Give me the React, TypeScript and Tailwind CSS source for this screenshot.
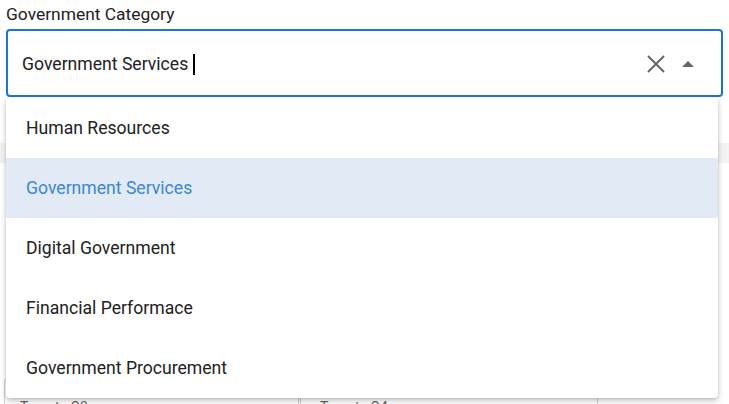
import React from 'react'

const options = [
  'Human Resources',
  'Government Services',
  'Digital Government',
  'Financial Performace',
  'Government Procurement',
]

const selected = 'Government Services'

const App = () => {
  return (
    <div className="relative w-[729px] h-[404px] overflow-hidden bg-white font-['Roboto',sans-serif] text-[#212121]">
      <div className="px-[6px]">
        <label className="block text-[17.4px] leading-[20px] pt-[4px] text-[#212121]">Government Category</label>
        <div className="mt-[5px] h-[68px] border-2 border-[#1976d2] rounded-[4px] flex items-center pl-[14px] pr-[27px] pt-[2px]">
          <span className="text-[17.6px] text-[#212121]">{selected}</span>
          <span className="ml-[5px] w-[2px] h-[21px] bg-black" />
          <div className="flex-1" />
          <svg width="20" height="20" viewBox="0 0 20 20" className="mr-[16px]">
            <path d="M2 2 L18 18 M18 2 L2 18" stroke="#666" strokeWidth="2" fill="none" />
          </svg>
          <svg width="12" height="6" viewBox="0 0 12 6">
            <path d="M0 6 L6 0 L12 6 Z" fill="#666" />
          </svg>
        </div>
      </div>

      {/* page content behind the menu */}
      <div className="mt-[46px] h-[20px] bg-[#f3f3f3]" />
      <div className="mt-[215px] ml-[4px] flex">
        <div className="w-[295px] h-[40px] border border-[#d0d0d0] rounded-tl-[4px] px-[15px] pt-[18px] text-[14px] text-[#666]">Target - Q3</div>
        <div className="ml-[1px] w-[298px] h-[40px] border border-[#d0d0d0] px-[19px] pt-[18px] text-[14px] text-[#666]">Target - Q4</div>
      </div>

      <ul className="absolute left-[6px] top-[98px] w-[712px] bg-white rounded-b-[4px] shadow-[0_3px_6px_rgba(0,0,0,0.2),0_1px_3px_rgba(0,0,0,0.12)]">
        {options.map((o) => (
          <li
            key={o}
            className={
              o === selected
                ? 'h-[60px] flex items-center pl-[20px] pt-[1px] text-[17.6px] bg-[#e1eaf5] text-[#3b86d6]'
                : 'h-[60px] flex items-center pl-[20px] pt-[1px] text-[17.6px] text-[#212121]'
            }
          >
            {o}
          </li>
        ))}
      </ul>
    </div>
  )
}

export default App
